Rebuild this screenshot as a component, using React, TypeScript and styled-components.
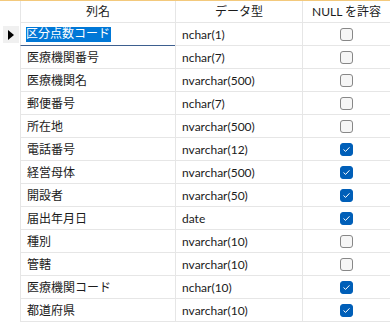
import styled, { createGlobalStyle } from 'styled-components'

const GlobalStyle = createGlobalStyle`
  html, body {
    margin: 0;
    padding: 0;
    background: #ffffff;
  }
  body {
    font-family: Lato, "Noto Sans CJK JP", sans-serif;
    font-size: 12px;
    color: #1b1b1b;
  }
`

const Grid = styled.div`
  width: 390px;
  height: 324px;
  overflow: hidden;
  background: #ffffff;
  border-top: 1px solid #f3c97c;
  box-sizing: border-box;
`

const Row = styled.div`
  display: grid;
  grid-template-columns: 20px 155px 127px 88px;
  height: 23px;
`

const HeaderRow = styled(Row)`
  height: 22px;
`

const Corner = styled.div`
  background: #ffffff;
`

const Cell = styled.div<{ $center?: boolean }>`
  display: flex;
  align-items: center;
  justify-content: ${p => (p.$center ? 'center' : 'flex-start')};
  padding-left: ${p => (p.$center ? '0' : '6px')};
  padding-top: 1px;
  border-left: 1px solid #e6e6e6;
  border-bottom: 1px solid #e6e6e6;
  white-space: nowrap;
  overflow: hidden;
  box-sizing: border-box;
  line-height: 1;
`

const HeaderCell = styled(Cell)`
  justify-content: center;
  padding-left: 0;
`

const NameCell = styled(Cell)<{ $editing?: boolean }>`
  ${p => p.$editing && 'border-bottom-color: #3d5f8f;'}
`

const Selector = styled.div`
  display: flex;
  align-items: center;
  justify-content: center;
`

const Marker = styled.div`
  width: 16px;
  height: 17px;
  background: #f0f0f0;
  display: flex;
  align-items: center;
  justify-content: center;
  margin-left: 1px;
  &::before {
    content: '';
    border-top: 5px solid transparent;
    border-bottom: 5px solid transparent;
    border-left: 6px solid #000000;
    margin-left: 1px;
  }
`

const Highlight = styled.span`
  background: #0078d7;
  color: #ffffff;
  padding: 1px 1px 2px 0;
  margin-left: -1px;
`

const Box = styled.div<{ $checked: boolean }>`
  width: 13px;
  height: 13px;
  box-sizing: border-box;
  border-radius: 3px;
  border: 1px solid ${p => (p.$checked ? '#005fb8' : '#878787')};
  background: ${p => (p.$checked ? '#005fb8' : '#f6f6f6')};
  display: flex;
  align-items: center;
  justify-content: center;
`

type Column = { name: string; type: string; nullable: boolean }

const columns: Column[] = [
  { name: '区分点数コード', type: 'nchar(1)', nullable: false },
  { name: '医療機関番号', type: 'nchar(7)', nullable: false },
  { name: '医療機関名', type: 'nvarchar(500)', nullable: false },
  { name: '郵便番号', type: 'nchar(7)', nullable: false },
  { name: '所在地', type: 'nvarchar(500)', nullable: false },
  { name: '電話番号', type: 'nvarchar(12)', nullable: true },
  { name: '経営母体', type: 'nvarchar(500)', nullable: true },
  { name: '開設者', type: 'nvarchar(50)', nullable: true },
  { name: '届出年月日', type: 'date', nullable: true },
  { name: '種別', type: 'nvarchar(10)', nullable: false },
  { name: '管轄', type: 'nvarchar(10)', nullable: false },
  { name: '医療機関コード', type: 'nchar(10)', nullable: true },
  { name: '都道府県', type: 'nvarchar(10)', nullable: true },
]

function Check({ checked }: { checked: boolean }) {
  return (
    <Box $checked={checked}>
      {checked && (
        <svg width="9" height="9" viewBox="0 0 9 9">
          <path d="M1.8 4.8 L3.6 6.4 L7.2 2.6" fill="none" stroke="#ffffff" strokeWidth="1" strokeLinecap="round" strokeLinejoin="round" />
        </svg>
      )}
    </Box>
  )
}

export default function App() {
  return (
    <>
      <GlobalStyle />
      <Grid>
        <HeaderRow>
          <Corner />
          <HeaderCell>列名</HeaderCell>
          <HeaderCell>データ型</HeaderCell>
          <HeaderCell>NULL を許容</HeaderCell>
        </HeaderRow>
        {columns.map((c, i) => (
          <Row key={c.name}>
            <Selector>{i === 0 && <Marker />}</Selector>
            <NameCell $editing={i === 0}>
              {i === 0 ? <Highlight>{c.name}</Highlight> : c.name}
            </NameCell>
            <Cell>{c.type}</Cell>
            <Cell $center>
              <Check checked={c.nullable} />
            </Cell>
          </Row>
        ))}
      </Grid>
    </>
  )
}
